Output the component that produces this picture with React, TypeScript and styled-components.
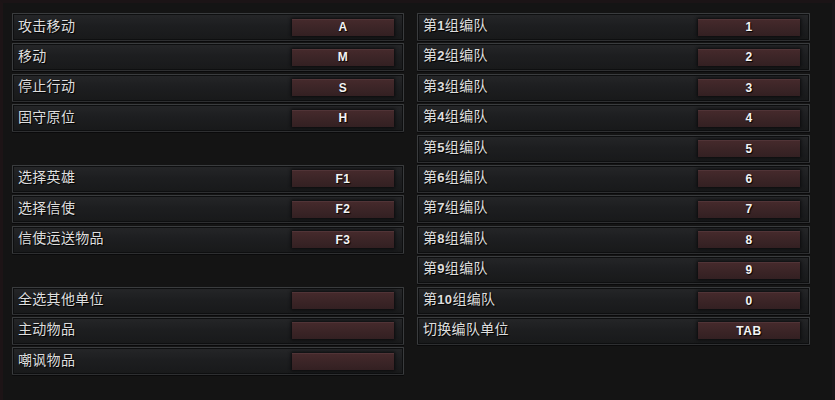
import styled, { createGlobalStyle } from "styled-components";

const GlobalStyle = createGlobalStyle`
  html, body {
    margin: 0;
    padding: 0;
    background: #131313;
  }
  body {
    width: 835px;
    height: 400px;
    overflow: hidden;
    font-family: "Noto Sans CJK SC", "Noto Sans", sans-serif;
  }
`;

const Frame = styled.div`
  box-sizing: border-box;
  width: 835px;
  height: 400px;
  padding: 10px 22px 0 9px;
  border-top: 3px solid #1b1416;
  border-left: 3px solid #1d1416;
  border-right: 3px solid #1a1519;
  background: #141414;
  display: grid;
  grid-template-columns: 392px 393px;
  column-gap: 13px;
`;

const Column = styled.div`
  display: flex;
  flex-direction: column;
  gap: 2.4px;
`;

const Row = styled.div`
  box-sizing: border-box;
  height: 28px;
  display: flex;
  align-items: center;
  justify-content: space-between;
  padding: 0 9px 0 5px;
  background: linear-gradient(#252628 0%, #1d1e20 45%, #18191a 100%);
  border: 1px solid #3a3c3e;
  border-bottom-color: #2e2f31;
  box-shadow: inset 0 0 0 1px #0e0f10, 0 1px 0 #0a0a0b;
  border-radius: 1px;
`;

const Spacer = styled.div`
  height: 28px;
`;

const Label = styled.span`
  color: #dedede;
  font-size: 14px;
  line-height: 1;
  margin-top: -5px;
  letter-spacing: 0.3px;
  text-shadow: 1px 1px 1px #000;
  white-space: nowrap;

  b {
    font-family: "Liberation Sans", Arial, sans-serif;
    font-weight: bold;
    font-size: 13px;
  }
`;

const Key = styled.div`
  box-sizing: border-box;
  width: 102px;
  height: 17px;
  display: flex;
  align-items: center;
  justify-content: center;
  background: linear-gradient(#462a2c 0%, #3c2527 50%, #332022 100%);
  box-shadow: 0 0 3px 1px #0b0b0c, inset 0 1px 0 #513437;
  color: #f4f4f4;
  font-family: "Liberation Sans", Arial, sans-serif;
  font-weight: bold;
  font-size: 12px;
  letter-spacing: 0.5px;
  text-shadow: 1px 1px 1px #000;
`;

type Bind = { label: React.ReactNode; key: string } | null;

const left: Bind[] = [
  { label: "攻击移动", key: "A" },
  { label: "移动", key: "M" },
  { label: "停止行动", key: "S" },
  { label: "固守原位", key: "H" },
  null,
  { label: "选择英雄", key: "F1" },
  { label: "选择信使", key: "F2" },
  { label: "信使运送物品", key: "F3" },
  null,
  { label: "全选其他单位", key: "" },
  { label: "主动物品", key: "" },
  { label: "嘲讽物品", key: "" },
];

const groupKeys = ["1", "2", "3", "4", "5", "6", "7", "8", "9", "0"];

const right: Bind[] = [
  ...groupKeys.map((k, i) => ({
    label: (
      <>
        第<b>{i + 1}</b>组编队
      </>
    ),
    key: k,
  })),
  { label: "切换编队单位", key: "TAB" },
];

const renderColumn = (items: Bind[]) =>
  items.map((item, i) =>
    item ? (
      <Row key={i}>
        <Label>{item.label}</Label>
        <Key>{item.key}</Key>
      </Row>
    ) : (
      <Spacer key={i} />
    )
  );

export default function App() {
  return (
    <>
      <GlobalStyle />
      <Frame>
        <Column>{renderColumn(left)}</Column>
        <Column>{renderColumn(right)}</Column>
      </Frame>
    </>
  );
}
